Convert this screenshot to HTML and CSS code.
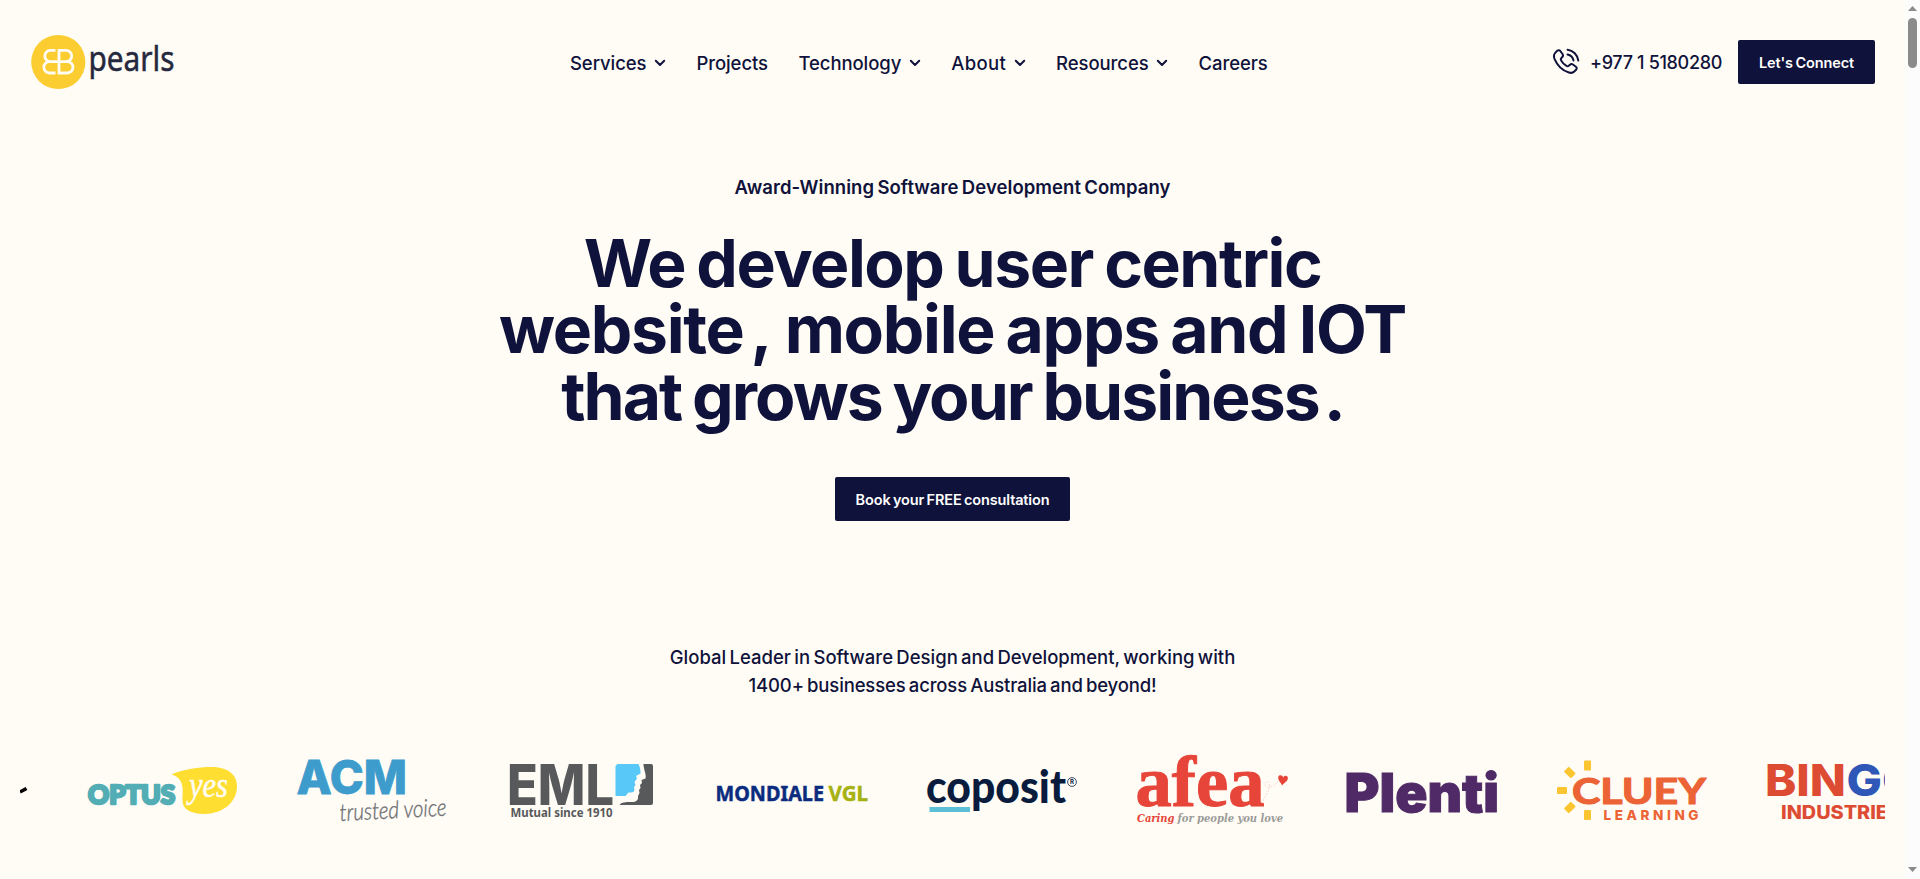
FILE: index.html
```html
<!DOCTYPE html>
<html lang="en">
<head>
<meta charset="utf-8">
<title>EB Pearls</title>
<link rel="stylesheet" href="styles.css">
</head>
<body>
<div class="window">
<div class="page">
  <header class="header">
    <a class="brand">
      <svg class="brand-logo" width="150" height="60" viewBox="30 32 150 60">
        <circle cx="58.3" cy="62" r="27.1" fill="#fbcd31"/>
        <g fill="none" stroke="#fffcf5" stroke-width="2.8">
          <path d="M55.5 50.3H50.5a5.7 5.7 0 0 0 0 11.4M55.500 73H49.5a5.6 5.6 0 0 1 0-11.3H66"/>
          <path d="M59 73V50.3H66a5.7 5.7 0 0 1 0 11.4h1.3a5.6 5.6 0 0 1 0 11.3H57.6"/>
        </g>
        <text class="t-pearls" x="88.5" y="70.5" textLength="86" lengthAdjust="spacingAndGlyphs">pearls</text>
      </svg>
    </a>
    <nav class="nav">
      <a>Services<svg class="chev" viewBox="0 0 12 8"><path d="M1.8 1.8 6 6l4.2-4.2"/></svg></a>
      <a>Projects</a>
      <a>Technology<svg class="chev" viewBox="0 0 12 8"><path d="M1.8 1.8 6 6l4.2-4.2"/></svg></a>
      <a class="loose">About<svg class="chev" viewBox="0 0 12 8"><path d="M1.8 1.8 6 6l4.2-4.2"/></svg></a>
      <a>Resources<svg class="chev" viewBox="0 0 12 8"><path d="M1.8 1.8 6 6l4.2-4.2"/></svg></a>
      <a>Careers</a>
    </nav>
    <div class="contact">
      <svg class="phone" width="28" height="28" viewBox="0 0 28 28">
        <path d="M3.4 4.6 5.2 2.8c1-.9 2.3-.8 3.1.2l2.2 3c.7 1 .6 2.1-.2 3l-1 1.100c-.6.7-.6 1.500-.2 2.300 1.200 2.400 3 4.200 5.400 5.500.8.400 1.600.400 2.300-.200l1.100-1c.9-.8 2-.9 3-.200l3 2.200c1 .8 1.100 2.100.2 3.100l-1.800 1.700c-1.400 1.400-3.300 1.700-5.400 1C10.300 22.400 5.200 17.300 2.500 10.800 1.600 8.400 1.700 6.300 3.400 4.600Z"/>
        <path d="M15.500 1.700A12.500 12.500 0 0 1 26.300 12.500M15.500 6.500A7.600 7.600 0 0 1 21.500 12.500"/>
      </svg>
      <span class="number">+977 1 5180280</span>
      <a class="btn">Let's Connect</a>
    </div>
  </header>

  <main class="hero">
    <p class="eyebrow">Award-Winning Software Development Company</p>
    <h1 class="title">
      <span class="l1">We develop user centric</span>
      <span class="l2">website<span class="comma">,</span> mobile apps and IOT</span>
      <span class="l3">that grows your business<span class="stop">.</span></span>
    </h1>
    <a class="btn btn-book">Book your FREE consultation</a>
    <p class="lead">Global Leader in Software Design and Development, working with<br><span class="lead-2">1400+ businesses across Australia and beyond!</span></p>
  </main>

  <section class="logos">
    <div class="track">
      <svg class="logo" viewBox="0 0 150 80"><path d="M143 41 149.500 37.500" stroke="#000" stroke-width="3.600"/></svg>

      <svg class="logo" viewBox="0 0 150 80">
        <text class="t-optus" x="1" y="53.200" textLength="87" lengthAdjust="spacingAndGlyphs">OPTUS</text>
        <path fill="#ffde32" d="M84.500 23.500C97 18 112 16 124 16c16 0 26 7 26 19 0 17-15 28-33 28-13 0-22-5-21.500-14 .3-9 2.500-22-11-25.500Z"/>
        <text class="t-yes" x="102" y="46" textLength="39" lengthAdjust="spacingAndGlyphs">yes</text>
      </svg>

      <svg class="logo" viewBox="0 0 150 80">
        <text class="t-acm" x="-.5" y="42.500" textLength="110.500" lengthAdjust="spacingAndGlyphs">ACM</text>
        <text class="t-voice" x="43" y="70" textLength="107" lengthAdjust="spacingAndGlyphs" transform="rotate(-3 43 69)">trusted voice</text>
      </svg>

      <svg class="logo" viewBox="0 0 150 80">
        <text class="t-eml" x="0" y="53.500" textLength="107" lengthAdjust="spacingAndGlyphs">EML</text>
        <path fill="#58c8f8" d="M110.500 13h21c1.500 3 2.200 6.500 2 9.500l-4.500 2.500 1 2.500-2.500 3.500 1 3-1.500 2 .5 3c-.5 3-3.500 2.500-6 2.500l-3 3.500h-10V15Z"/>
        <path fill="#58595b" d="M136.500 13h7.500a2 2 0 0 1 2 2v37a2 2 0 0 1-2 2h-31.500c2-3 6-3 12-3 5 0 7-2 6.500-6l1.500-3-.5-3 1.500-2-.5-3 2-2-.5-3 4-1.500c1-4-1.500-8-2-13.500Z"/>
        <text class="t-mutual" x="3.500" y="66" textLength="102" lengthAdjust="spacingAndGlyphs">Mutual since 1910</text>
      </svg>

      <svg class="logo" viewBox="0 0 150 80">
        <text class="t-mondiale" x="-1.500" y="50" textLength="108.500" lengthAdjust="spacingAndGlyphs" fill="#0b2c7e" stroke="#0b2c7e">MONDIALE</text>
        <text class="t-mondiale" x="111.500" y="50" textLength="39.500" lengthAdjust="spacingAndGlyphs" fill="#a6b112" stroke="#a6b112">VGL</text>
      </svg>

      <svg class="logo" viewBox="0 0 150 80">
        <text class="t-coposit" x="-1" y="51.500" textLength="140" lengthAdjust="spacingAndGlyphs">coposit</text>
        <rect x="2.500" y="56" width="40.500" height="5" fill="#5bc0d6"/>
        <circle cx="145" cy="31" r="4.400" fill="none" stroke="#0a1c3d" stroke-width=".8"/>
        <text class="t-reg" x="145" y="33.400">R</text>
      </svg>

      <svg class="logo" viewBox="0 0 150 80">
        <text class="t-afea" x="-1.500" y="54.500" textLength="129" lengthAdjust="spacingAndGlyphs">afea</text>
        <path d="M126 50c3-7 7-11 6.500-17-2-5-7-1-4 2 5 3 11-1 16-8" fill="none" stroke="#f6cfc8" stroke-width=".8" stroke-dasharray="2 1.300"/>
        <path fill="#e74539" d="M145 34.500c-1-3-4.500-5.500-3.700-8.700 1-2.400 4.300-1.700 4.900.8 1-2.700 4.500-2 4.700.5.200 3-3.600 4.700-5.900 7.400Z"/>
        <text class="t-care" x="0" y="71" textLength="37.500" lengthAdjust="spacingAndGlyphs" fill="#e74539">Caring</text>
        <text class="t-care" x="40.500" y="71" textLength="105.500" lengthAdjust="spacingAndGlyphs" fill="#9b9b99">for people you love</text>
      </svg>

      <svg class="logo" viewBox="0 0 150 80">
        <text class="t-plenti" x="-2.500" y="60.700" textLength="154.500" lengthAdjust="spacingAndGlyphs">Plenti</text>
      </svg>

      <svg class="logo" viewBox="0 0 150 80">
        <g fill="#fbc531">
          <rect x="27" y="9.500" width="7" height="10" rx="1"/>
          <rect x="9.300" y="16.500" width="7" height="10" rx="1" transform="rotate(-45 12.800 21.500)"/>
          <rect x="0" y="36" width="10" height="7" rx="1"/>
          <rect x="9.300" y="51.500" width="7" height="10" rx="1" transform="rotate(45 12.800 56.500)"/>
          <rect x="27" y="59" width="7" height="10" rx="1"/>
        </g>
        <text class="t-cluey" x="15" y="52.700" textLength="134" lengthAdjust="spacingAndGlyphs">CLUEY</text>
        <text class="t-learning" x="46.500" y="69" textLength="95" lengthAdjust="spacing">LEARNING</text>
      </svg>

      <svg class="logo" viewBox="0 0 150 80">
        <text class="t-bingo" x="-2" y="44.500" textLength="81" lengthAdjust="spacingAndGlyphs" fill="#dd4b33">BIN</text>
        <text class="t-bingo" x="79.500" y="44.500" textLength="72" lengthAdjust="spacingAndGlyphs" fill="#2f57b8">GO</text>
        <text class="t-industries" x="14" y="68" textLength="120" lengthAdjust="spacingAndGlyphs">INDUSTRIES</text>
      </svg>
    </div>
  </section>
</div>
<aside class="scrollbar">
  <svg width="15" height="879" viewBox="0 0 15 879">
    <path fill="#8b8b8b" d="M3 11 7.500 6 12 11ZM3 867h9l-4.500 5Z"/>
    <rect x="3" y="18" width="9" height="50" rx="4.500" fill="#8b8b8b"/>
  </svg>
</aside>
</div>
</body>
</html>
```
FILE: styles.css
```css
* { box-sizing: border-box; }
body { margin: 0; font-family: Inter, "Liberation Sans", sans-serif; color: #0f123a; }
p, h1 { margin: 0; }
svg { display: block; flex: none; }

.window { display: flex; height: 879px; overflow: hidden; }
.page { flex: 1; min-width: 0; background: #fffcf5; }
.scrollbar { width: 15px; background: #fcfcfc; }

.header { display: grid; grid-template-columns: 540px 1fr auto; align-items: center; height: 124px; padding: 0 30px; }
.brand-logo { overflow: visible; }
.nav { display: flex; gap: 30.5px; font-size: 18.5px; font-weight: 500; letter-spacing: -.08px; line-height: 28px; padding-top: 1px; }
.nav a { display: flex; align-items: center; }
.nav .loose { letter-spacing: .35px; }
.chev { width: 12px; height: 8px; margin-left: 7.5px; fill: none; stroke: #0f123a; stroke-width: 2; stroke-linecap: round; stroke-linejoin: round; }
.contact { display: flex; align-items: center; white-space: nowrap; }
.phone { fill: none; stroke: #0f123a; stroke-width: 2; stroke-linecap: round; stroke-linejoin: round; margin-right: 10px; }
.number { width: 148px; padding-top: 1px; font-size: 18px; font-weight: 500; letter-spacing: -.33px; }

.btn { display: flex; align-items: center; justify-content: center; width: 137px; height: 44px; border-radius: 2px; background: #0f123a; color: #fff; font-size: 14.5px; font-weight: 600; letter-spacing: -.1px; word-spacing: -1px; }
.btn-book { width: 235px; margin-top: 47.8px; letter-spacing: -.15px; }

.hero { display: flex; flex-direction: column; align-items: center; height: 627px; padding-top: 49px; text-align: center; white-space: nowrap; }
.eyebrow { font-size: 18.5px; font-weight: 600; line-height: 28px; letter-spacing: .06px; word-spacing: -1.4px; }
.title { display: flex; flex-direction: column; align-items: center; margin-top: 29px; font-size: 66px; font-weight: 700; line-height: 66.4px; word-spacing: -3px; }
.l1 { letter-spacing: -1.47px; }
.l2 { letter-spacing: -1.3px; }
.l3 { letter-spacing: -1.95px; }
.comma { margin: 0 2px 0 7px; }
.stop { margin-left: 5px; }
.lead { margin-top: 122px; font-size: 18.5px; font-weight: 500; line-height: 28px; word-spacing: -1.6px; }
.lead-2 { letter-spacing: -.14px; }

.logos { margin: 0 20px; overflow: hidden; }
.track { display: flex; gap: 60px; margin-left: -143px; }
.logo { width: 150px; height: 80px; overflow: visible; }

.t-pearls { font: 400 35px "Noto Sans", sans-serif; fill: #25283d; stroke: #25283d; stroke-width: .5; }
.t-optus { font: 900 26px Lato, sans-serif; fill: #52adb5; stroke: #52adb5; stroke-width: 2.600; stroke-linejoin: round; }
.t-yes { font: italic 400 36px "Liberation Serif", serif; fill: #fffcf5; stroke: #fffcf5; stroke-width: .5; }
.t-acm { font: 800 47px Inter, sans-serif; fill: #3d9ccc; stroke: #3d9ccc; stroke-width: .8; }
.t-voice { font: italic 300 24px Lato, sans-serif; fill: #707175; stroke: #707175; stroke-width: .4; }
.t-eml { font: 800 56px Inter, sans-serif; fill: #58595b; }
.t-mutual { font: 700 12px "Noto Sans", sans-serif; fill: #58595b; }
.t-mondiale { font: 700 22px "Noto Sans", sans-serif; stroke-width: .5; }
.t-coposit { font: 900 46px Lato, sans-serif; fill: #0a1c3d; }
.t-reg { font: 700 6px Inter, sans-serif; fill: #0a1c3d; text-anchor: middle; }
.t-afea { font: 700 71px "Liberation Serif", serif; fill: #e74539; stroke: #e74539; stroke-width: 1; }
.t-care { font: italic 700 11.500px "DejaVu Serif", serif; }
.t-plenti { font: 900 53px Inter, sans-serif; fill: #4f2a66; stroke: #4f2a66; stroke-width: 1; }
.t-cluey { font: 700 37px Lato, sans-serif; fill: #ec6436; stroke: #ec6436; stroke-width: 1.200; stroke-linejoin: round; }
.t-learning { font: 800 13.500px Inter, sans-serif; fill: #ec6436; }
.t-bingo { font: 800 44px Inter, sans-serif; }
.t-industries { font: 800 18.500px Inter, sans-serif; fill: #dd4b33; }
```
